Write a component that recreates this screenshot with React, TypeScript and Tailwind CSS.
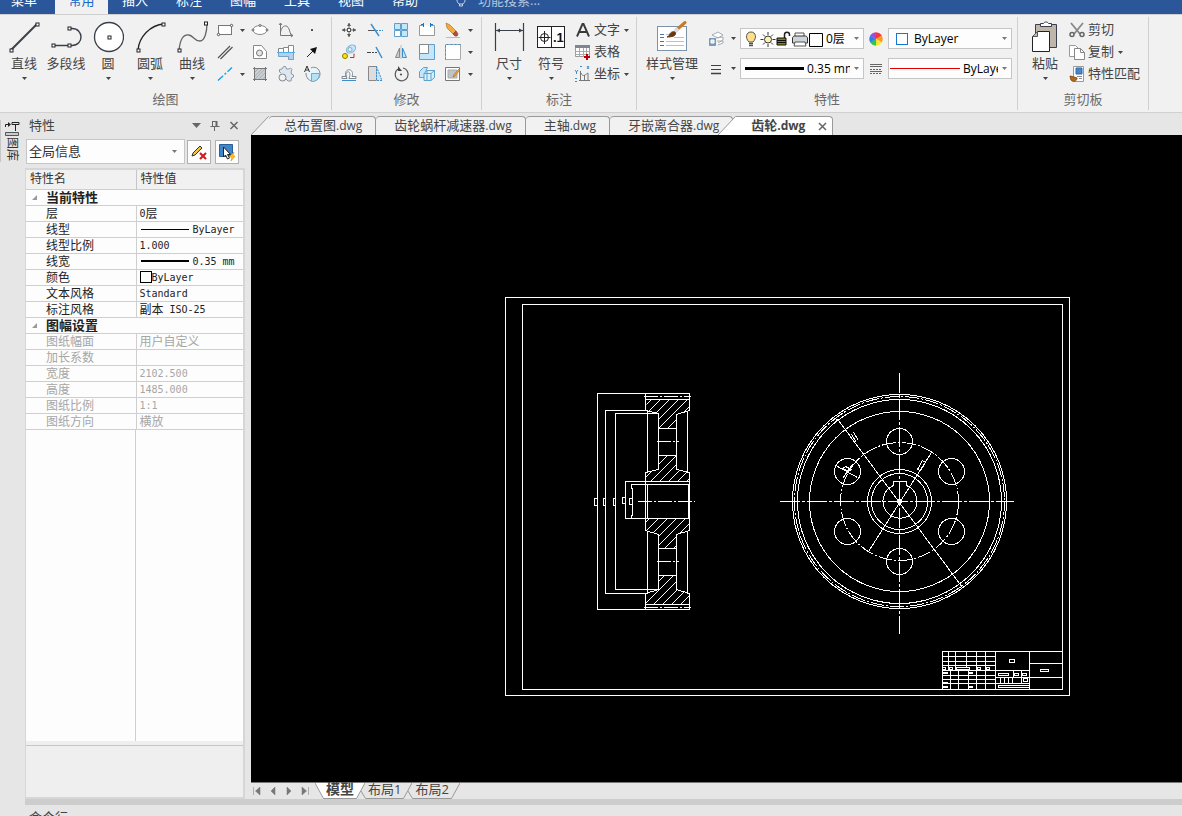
import { ReactNode } from "react";

const INK = "#3b3f4a";
const BLUE = "#3c8dcb";
const SKY = "#c3e6fa";

function Svg({ size = 18, children }: { size?: number; children: ReactNode }) {
  return (
    <svg width={size} height={size} viewBox={`0 0 ${size} ${size}`} fill="none" stroke={INK} className="shrink-0">
      {children}
    </svg>
  );
}

function Node({ x, y }: { x: number; y: number }) {
  return <rect x={x - 1.5} y={y - 1.5} width="3" height="3" fill="#fff" stroke="#222" />;
}

function Caret({ className = "text-[#444]" }: { className?: string }) {
  return (
    <svg width="5" height="3" viewBox="0 0 5 3" className={`shrink-0 ${className}`}>
      <path d="M0 0h5L2.5 3z" fill="currentColor" />
    </svg>
  );
}

/* ---------- large icons ---------- */

const lineIcon = (
  <Svg size={32}>
    <path d="M3 29 29 3" strokeWidth="2" />
    <Node x={3.5} y={29.5} />
    <Node x={29.5} y={3.5} />
  </Svg>
);

const polylineIcon = (
  <Svg size={32}>
    <path d="M3 24.5h16M19 7.5h3c12 0 12 17 0 17h-3" strokeWidth="1.4" />
    <Node x={3.5} y={24.5} />
    <Node x={19.5} y={24.5} />
    <Node x={19.5} y={7.5} />
  </Svg>
);

const circleIcon = (
  <Svg size={32}>
    <circle cx="17" cy="16" r="14.5" fill="#fff" strokeWidth="1.3" />
    <Node x={17.5} y={16.5} />
  </Svg>
);

const arcIcon = (
  <Svg size={32}>
    <path d="M4 29C5 16 16 4 30 3" stroke="#222" strokeWidth="1.3" />
    <Node x={4.5} y={29.5} />
    <Node x={29.5} y={3.5} />
  </Svg>
);

const curveIcon = (
  <Svg size={32}>
    <path d="M3 30C4 17 8 13 13 14s5 6 11 6c5 0 7-10 7-18" stroke="#666" strokeWidth="1.3" />
    <Node x={3.5} y={29.5} />
    <Node x={30} y={2.5} />
  </Svg>
);

const dimensionIcon = (
  <Svg size={32}>
    <path d="M2.5 2v28M30.5 2v28M3 9.5h27" strokeWidth="1.2" />
    <path d="M3 9.5l4-2v4zM30 9.5l-4-2v4z" fill={INK} stroke="none" />
  </Svg>
);

const symbolIcon = (
  <Svg size={32}>
    <rect x="2.500" y="5.500" width="27" height="21" fill="#fff" stroke="#222" />
    <path d="M16.500 5v22M3.500 16.500h12M9.500 10v13" stroke="#222" />
    <circle cx="9.500" cy="16.500" r="4" stroke="#222" />
    <text x="18" y="21" fontSize="13" fontWeight="700" fontFamily="Liberation Sans" fill="#111" stroke="none">
      .1
    </text>
  </Svg>
);

const styleIcon = (
  <Svg size={32}>
    <rect x="1.500" y="5.500" width="29" height="24" fill="#fff" stroke="#7b93a8" />
    <path d="M4 13.500h4M4 16.500h4M4 20.500h4M4 24.500h4" stroke="#4c74a0" />
    <path d="M10 13.500h6M18 16.500h10M10 20.500h18M10 24.500h18" stroke="#b4c1d4" />
    <path d="m29 1.500-8 7" stroke="#c87a2a" strokeWidth="3" strokeLinecap="round" />
    <path d="m22 7.500-3 3" stroke="#d8dde2" strokeWidth="4" />
    <path d="M13 15c1-4 4-5 6-4 2 3-1 5-8 5z" fill="#6b3a12" stroke="#6b3a12" />
  </Svg>
);

const pasteIcon = (
  <Svg size={32}>
    <path d="M6.500 3.500h21v23h-21z" fill="#bfb6ab" stroke={INK} />
    <path d="M11.500 5.500v-3h3c1-2 4-2 5 0h3v3z" fill="#fff" />
    <path d="M3.500 30.500v-15l5-5h12v20z" fill="#fff" stroke="#222" />
    <path d="M3.500 15.500h5v-5z" fill="#bbb" stroke="#555" />
  </Svg>
);

/* ---------- small icons ---------- */

const drawIcons: ReactNode[][] = [
  [
    <Svg>
      <rect x="2.500" y="4.500" width="13" height="9" fill="#fff" stroke="#777" />
      <circle cx="2.500" cy="13.500" r="1.200" fill="#fff" stroke="#555" />
      <circle cx="15.500" cy="4.500" r="1.200" fill="#fff" stroke="#555" />
    </Svg>,
    <Svg>
      <ellipse cx="9" cy="9" rx="7" ry="4.500" fill="#fff" stroke="#888" />
      <circle cx="2" cy="9" r="1" fill="#fff" stroke="#666" />
      <circle cx="16" cy="9" r="1" fill="#fff" stroke="#666" />
      <circle cx="9" cy="4.500" r="1" fill="#fff" stroke="#666" />
    </Svg>,
    <Svg>
      <path d="M3.500 2v12.500H16M2 4l1.500-2L5 4M14 13l2 1.500-2 1.500" stroke="#777" />
      <path d="M3.500 11C5 4 10 3 12 8l2 6" stroke="#777" />
    </Svg>,
    <Svg>
      <path d="M8 8h2v2H8z" fill="#555" stroke="none" />
    </Svg>,
  ],
  [
    <Svg>
      <path d="M2 15 14 3M4.500 16 16.500 4" stroke="#555" strokeWidth="1.200" />
    </Svg>,
    <Svg>
      <path d="M2.500 15.500v-13h8l5 6v7z" fill="#fff" stroke="#888" />
      <circle cx="8.500" cy="10" r="3" fill="#e4e4e4" stroke="#777" />
    </Svg>,
    <Svg>
      <path d="M1.500 5.500h5v7h-5zM6.500 4.500h5v9h-5zM11.500 2.500h5v14h-5z" fill="#fff" stroke="#888" />
      <path d="M1.500 9.500h15v7h-5v-3h-10z" fill="#b4d0ec" stroke="#7da0c4" />
      <path d="M0 9.500h18" stroke="#4ab0ea" />
    </Svg>,
    <Svg>
      <path d="m4 14 6-6" stroke="#222" />
      <path d="m14 4-2 7-5-5z" fill="#111" stroke="none" />
    </Svg>,
  ],
  [
    <Svg>
      <path d="M2 15.500 16 2.500" stroke="#19a0e6" strokeWidth="1.400" strokeDasharray="7 2 2 2" />
    </Svg>,
    <Svg>
      <path d="M3.500 3.500h11v11h-11z" fill="#c9ced3" stroke="#777" />
      <path d="m4 7 4-4M4 11l7-7M4 14 14 4M8 14l6-6M12 14l2-2" stroke="#aab0b6" />
      <path d="M2 3.500h14M2 14.500h14M3.500 2v14M14.500 2v14" stroke="#777" />
    </Svg>,
    <Svg>
      <path
        d="M4 8 2.500 7V4.500L5 4l1.500-2.500h2L9.500 4h2.500L13.500 3l1.500 1.500L14 7l.5 2 2 1v2l-2 1-.5 3h-3l-2-2"
        fill="#dde7f2"
        stroke="#8d97a1"
      />
      <circle cx="5.500" cy="12.500" r="3.500" fill="#f1f1f1" stroke="#7d8791" />
    </Svg>,
    <Svg>
      <path d="M3 8c0 11 14 10 14 1 0-6-6-8-9-6" fill="#e6f4fc" stroke="#888" />
      <path d="M8.500 8.500h8c0 5-3 8-8 8z" fill="#b6e2f8" stroke="#7aa9c4" />
      <path d="m1.500 7 2.500-6 2.500 6M2.500 5h3" stroke="#333" />
    </Svg>,
  ],
];

const modifyIcons: ReactNode[][] = [
  [
    <Svg>
      <path d="M9 2v5M9 11v5M2 9h5M11 9h5" stroke="#666" />
      <path d="M9 2 7 5h4zM9 16l-2-3h4zM2 9l3-2v4zM16 9l-3-2v4z" fill="#555" stroke="none" />
      <rect x="7.500" y="7.500" width="3" height="3" fill="#fff" stroke="#555" />
    </Svg>,
    <Svg>
      <path d="M2 9.500h7" stroke="#555" />
      <path d="M10 9.500h7" stroke={BLUE} strokeDasharray="2 1" />
      <path d="m5 3 8 12" stroke={BLUE} strokeWidth="1.400" />
    </Svg>,
    <Svg>
      <path d="M2.500 2.500h6v6h-6zM9.500 2.500h6v6h-6zM9.500 9.500h6v6h-6z" fill={SKY} stroke="#5f9fd0" />
      <path d="M2.500 9.500h6v6h-6z" fill="#fff" stroke="#5f9fd0" />
    </Svg>,
    <Svg>
      <path d="M5 4.500H1.500v10h15v-10H13" fill="#fff" stroke="#999" />
      <path d="M5.500 2v4M12.500 2v4M3 3.500h3M12 3.500h3" stroke="#1a75c0" />
    </Svg>,
    <Svg>
      <path d="m2 2 1 5 6 6 3-3-6-6z" fill="#f4a93c" stroke="#b98035" strokeWidth=".800" />
      <path d="m9 13 2 2h2l1-2-2-3z" fill="#b1503f" stroke="#8b4034" strokeWidth=".800" />
      <path d="M2 16.500h14" stroke="#bbb" />
    </Svg>,
  ],
  [
    <Svg>
      <circle cx="5" cy="13" r="2.500" fill="#ffe600" stroke="#8f7c00" />
      <ellipse cx="11" cy="6" rx="5" ry="3.500" fill={SKY} stroke="#7badcf" transform="rotate(-35 11 6)" />
      <circle cx="10" cy="6.500" r="2" fill="#eaf6fd" stroke="#7badcf" />
      <path d="M10 14.500h4v-4" stroke="#b33" />
    </Svg>,
    <Svg>
      <path d="M1 9.500h4" stroke="#444" />
      <path d="M6 9.500h6" stroke="#444" strokeDasharray="2 1" />
      <path d="m10 4 6 11" stroke={BLUE} strokeWidth="1.500" />
    </Svg>,
    <Svg>
      <path d="M7.500 5v9.500h-4z" fill="#ccc" stroke="#888" />
      <path d="M10.500 5v9.500h4z" fill={SKY} stroke={BLUE} />
      <path d="M9 2v14" stroke="#bbb" />
    </Svg>,
    <Svg>
      <path d="M1.500 1.500h15v15h-15z" fill={SKY} stroke="#5f9fd0" />
      <path d="M1.500 1.500h9v9h-9z" fill="#fff" stroke="#888" />
    </Svg>,
    <Svg>
      <path d="M1.500 1.500h15v15h-15z" fill="#fff" stroke="#aaa" />
      <path d="M1.500 16.500v-15h15" stroke={BLUE} strokeDasharray="2 2" />
    </Svg>,
  ],
  [
    <Svg>
      <path d="M2 11.500h4c-3-9 9-9 6 0h4v2H9c4-10-6-8-2 0H2z" fill="#fff" stroke="#7d8791" />
      <path d="M2 15.500h14" stroke={BLUE} />
    </Svg>,
    <Svg>
      <path d="M2.500 1.500h8v14h-8z" fill="#ddd" stroke="#888" />
      <path d="M10.500 1.500 16 15.500h-5.500z" fill={SKY} stroke={BLUE} strokeDasharray="2 1" />
    </Svg>,
    <Svg>
      <path d="M6 4a6.500 6.500 0 1 0 5-1" stroke="#555" strokeWidth="1.200" />
      <path d="M6 1v5h4z" fill="#444" stroke="none" />
      <circle cx="9" cy="9.500" r="1" fill="#444" stroke="none" />
    </Svg>,
    <Svg>
      <path d="m1.500 6.500 4-4h4l-2 4v6h-6z" fill={SKY} stroke="#5aa2cf" />
      <path d="m6 8.500 3-3h7.500v7L13 15.500H6z" fill="#d9f0fc" stroke="#5aa2cf" />
      <path d="M6 8.500h7v7M13 8.500l3.500-3M9 5.500v10" stroke="#5aa2cf" />
    </Svg>,
    <Svg>
      <path d="M1.500 2.500h14v13h-14z" fill="#fff" stroke="#777" />
      <path d="M4 5h9v8H4z" fill="#c0c4c8" stroke="#aaa" />
      <path d="m16 5-5 6-2 1 1-2.500 5-5.500z" fill="#f4a93c" stroke="#a8702a" strokeWidth=".700" />
    </Svg>,
  ],
];

const textIcon = (
  <Svg>
    <path d="M3 15.500 8.500 3h1L15 15.500M5 11h8" stroke="#3a3a3a" strokeWidth="1.900" />
  </Svg>
);

const tableIcon = (
  <Svg>
    <path d="M1.500 2.500h14v11h-14z" fill="#fff" stroke="#999" />
    <path d="M1 2h15v3H1z" fill="#7d8791" stroke="none" />
    <path d="M5.500 5v9M9.500 5v9M12.500 5v9M1 8.500h15M1 11.500h15" stroke="#aaa" />
    <path d="M10 14h6M13 11v6" stroke="#c00000" strokeWidth="2" />
  </Svg>
);

const coordIcon = (
  <Svg>
    <path d="M6.500 6v10M5 15.500h11M7 8c2 5 5 1 7 0v7M10.500 10v6" stroke="#777" />
    <path d="m1 5 1.500 2L4 5M2.500 7v2M6 1.500h2M13 1l2 3M15 1l-2 3M1 13.500h2M1 16.500h2" stroke={BLUE} />
  </Svg>
);

const cutIcon = (
  <Svg>
    <path d="m3 2 9 11M15 2 6 13" stroke="#888" strokeWidth="1.800" />
    <circle cx="4" cy="13.500" r="2" stroke="#666" strokeWidth="1.500" />
    <circle cx="14" cy="13.500" r="2" stroke="#666" strokeWidth="1.500" />
  </Svg>
);

const copyIcon = (
  <Svg>
    <path d="M1.500 2.500h6l3 3v8h-9z" fill="#fff" stroke="#999" />
    <path d="M6.500 5.500h6l4 4v7h-10z" fill="#fff" stroke="#888" />
    <path d="M12.500 5.500v4h4" stroke="#888" />
  </Svg>
);

const matchIcon = (
  <Svg>
    <path d="M5.500 1.500h10v15h-10z" fill="#fff" stroke="#999" />
    <path d="M8 3h6v6H8z" fill="#4a86c5" stroke="#2f6aa8" />
    <path d="M9 11.500h5M11 13.500h3" stroke="#888" />
    <path d="m2 11 4 1 3 1c0 4-5 4-6 2z" fill="#b0691e" stroke="#8b5216" />
  </Svg>
);

const layersIcon = (
  <Svg>
    <path d="m5 5 6-3 5 3-5 3zM9 8l7-1v3l-5 3M10 11h6v2l-5 2" fill="#fff" stroke="#a4adb6" />
    <path d="M2.500 8.500h6v7h-6z" fill="#7b9cbf" stroke="#7f98b2" />
    <path d="M4 10h3v3H4z" fill="#dbe9f7" stroke="#fff" />
  </Svg>
);

const weightIcon = (
  <Svg>
    <path d="M4 5.500h10M4 9.500h10" />
    <path d="M4 13.500h10" strokeWidth="1.500" />
  </Svg>
);

const linetypeIcon = (
  <Svg>
    <path d="M3 4.500h12M3 6.500h12M3 11.500h12" stroke="#666" />
    <path d="M3 9.500h12M3 13.500h12" stroke="#666" strokeDasharray="2 1" />
  </Svg>
);

const wheel = ["#f33", "#ff9a1f", "#ffe62e", "#35c443", "#2b7de9", "#a24bd8"];
const colorIcon = (
  <Svg>
    {wheel.map((c, i) => (
      <path key={c} d="M9 9V2.500a6.500 6.500 0 0 1 5.630 3.250z" fill={c} stroke={c} strokeWidth=".3" transform={`rotate(${i * 60} 9 9)`} />
    ))}
  </Svg>
);

const layerStateIcons = (
  <svg width="80" height="18" viewBox="0 0 80 18" fill="none" className="shrink-0">
    <path d="M5 12C1 8 2 2 7 2s6 6 2 10z" fill="#ffe08a" stroke="#555" />
    <path d="M5 13.500h4M5 15.500h4" stroke="#555" strokeWidth="1.500" />
    <circle cx="24" cy="9.500" r="3.500" fill="#fff3b0" stroke="#333" />
    <path d="M24 2v3M24 14v3M16.500 9.500h3M28.500 9.500h3M19 4.500l2 2M27 12.500l2 2M19 14.500l2-2M27 6.500l2-2" stroke="#333" />
    <path d="M40.500 8V4.500c0-3 5-3 5 0V6" stroke="#222" strokeWidth="1.500" />
    <path d="M33 8h9v7h-9z" fill="#8a8400" stroke="#111" />
    <path d="M33 10.500h9M33 12.500h9" stroke="#111" />
    <path d="M51 7V3h9v4" fill="#fff" stroke="#555" />
    <path d="M48.500 8c0-1 1-2 2-2h11c1 0 2 1 2 2v5h-15z" fill="#cfd4da" stroke="#333" />
    <path d="M51 12h10l1 4H50z" fill="#fff" stroke="#555" />
    <path d="M65.500 3.500h13v13h-13z" fill="#fff" stroke="#000" />
  </svg>
);

/* ---------- ribbon ---------- */

interface GroupProps {
  title: string;
  children: ReactNode;
  width: string;
  inset: string;
}

function Group({ title, children, width, inset }: GroupProps) {
  return (
    <section aria-label={title} className={`flex shrink-0 flex-col border-r border-[#d0d0d0] ${width}`}>
      <div className={`flex h-18 items-start ${inset}`}>{children}</div>
      <h2 className="text-center text-[13px] leading-5 text-[#6a6a6a]">{title}</h2>
    </section>
  );
}

function BigButton({ icon, label, caret = true, wide }: { icon: ReactNode; label: string; caret?: boolean; wide?: boolean }) {
  return (
    <button className={`flex shrink-0 flex-col items-center pt-1 whitespace-nowrap ${wide ? "w-15" : "w-[42px]"}`}>
      {icon}
      <span className="mb-1 leading-5">{label}</span>
      {caret && <Caret />}
    </button>
  );
}

function RowButton({ icon, label, caret }: { icon: ReactNode; label: string; caret?: boolean }) {
  return (
    <button className="flex h-[22px] items-center">
      <span className="mr-0.5">{icon}</span>
      {label}
      {caret && (
        <span className="ml-1">
          <Caret />
        </span>
      )}
    </button>
  );
}

function Combo({ label, value, lead, clip }: { label: string; value: string; lead: ReactNode; clip?: boolean }) {
  return (
    <label className="flex h-[21px] w-31 items-center border border-[#c6c6c6] bg-[#fdfdfd] pr-1">
      {lead}
      <select
        aria-label={label}
        className={`min-w-0 flex-1 appearance-none overflow-hidden bg-transparent text-[12px] leading-4 text-black outline-none ${clip ? "mr-1" : ""}`}
      >
        <option>{value}</option>
      </select>
      <Caret className="text-[#777]" />
    </label>
  );
}

function IconGrid({ rows, names }: { rows: ReactNode[][]; names: string }) {
  return (
    <>
      {rows.map((row, r) => (
        <div key={r} className="flex h-[22px]">
          {row.map((icon, c) => (
            <button key={c} aria-label={`${names} ${r + 1}-${c + 1}`} className="flex w-[26px] items-center justify-center">
              {icon}
            </button>
          ))}
        </div>
      ))}
    </>
  );
}

const menus = ["插入", "标注", "图幅", "工具", "视图", "帮助"];

function MenuBar() {
  return (
    <nav className="flex h-[14px] shrink-0 items-end overflow-hidden bg-[#2b579a] text-white">
      <button className="w-[55px] shrink-0 pb-[5px] pl-[11px] text-left leading-[18px]">菜单</button>
      <button className="w-[53px] shrink-0 bg-[#f1f1f1] pb-[5px] leading-[18px] text-[#1a66c4]">常用</button>
      {menus.map((m) => (
        <button key={m} className="w-[54px] shrink-0 pb-[5px] leading-[18px]">
          {m}
        </button>
      ))}
      <div className="ml-6 flex items-end gap-3">
        <svg width="10" height="14" viewBox="0 0 10 14" fill="none" stroke="#c9d5e8">
          <path d="M1 0c0 2 1 3 2 4h4c1-1 2-2 2-4M3.500 4v2h3V4" />
        </svg>
        <span className="pb-[5px] leading-[18px] text-[#b4c4de]">功能搜索...</span>
      </div>
    </nav>
  );
}

function Ribbon() {
  return (
    <div className="flex h-[99px] shrink-0 border-y border-[#d0d0d0] bg-[#f1f1f1] py-0.5 text-[#444]">
      <Group title="绘图" width="w-83" inset="pl-[3px]">
        <BigButton icon={lineIcon} label="直线" />
        <BigButton icon={polylineIcon} label="多段线" caret={false} />
        <BigButton icon={circleIcon} label="圆" />
        <BigButton icon={arcIcon} label="圆弧" />
        <BigButton icon={curveIcon} label="曲线" />
        <div className="flex pt-0.5">
          <div className="w-[34px] pl-[3px]">
            {drawIcons.map((row, i) => (
              <button key={i} aria-label={`绘图工具 ${i + 1}`} className="flex h-[22px] items-center gap-[6px]">
                {row[0]}
                {i !== 1 && <Caret />}
              </button>
            ))}
          </div>
          <div>
            <IconGrid names="绘图" rows={drawIcons.map((row) => row.slice(1))} />
          </div>
        </div>
      </Group>

      <Group title="修改" width="w-[150px]" inset="pl-1">
        <div className="pt-0.5">
          <IconGrid names="修改" rows={modifyIcons} />
        </div>
        <div className="flex flex-col pt-0.5 pl-0.5">
          {[1, 2, 3].map((n) => (
            <button key={n} aria-label={`更多修改 ${n}`} className="flex h-[22px] items-center">
              <Caret />
            </button>
          ))}
        </div>
      </Group>

      <Group title="标注" width="w-[155px]" inset="pl-[6px]">
        <BigButton icon={dimensionIcon} label="尺寸" />
        <BigButton icon={symbolIcon} label="符号" />
        <div className="flex flex-col pt-0.5 pl-0.5">
          <RowButton icon={textIcon} label="文字" caret />
          <RowButton icon={tableIcon} label="表格" />
          <RowButton icon={coordIcon} label="坐标" caret />
        </div>
      </Group>

      <Group title="特性" width="w-[381px]" inset="pl-[5px]">
        <BigButton icon={styleIcon} label="样式管理" wide />
        <div className="flex flex-col gap-[9px] pt-[11px] pl-[5px]">
          <div className="flex items-center">
            <button aria-label="图层" className="flex items-center gap-[6px]">
              {layersIcon}
              <Caret />
            </button>
            <div className="ml-1">
              <Combo label="当前层" value="0层" lead={<span className="mr-0.5 pl-[3px]">{layerStateIcons}</span>} />
            </div>
            <button aria-label="颜色设置" className="mx-[3px]">
              {colorIcon}
            </button>
            <Combo label="颜色" value="ByLayer" lead={<span className="mr-[6px] ml-[7px] size-3 shrink-0 border border-[#1a75d0] bg-white" />} />
          </div>
          <div className="flex items-center">
            <button aria-label="线宽设置" className="flex items-center gap-[6px]">
              {weightIcon}
              <Caret />
            </button>
            <div className="ml-1">
              <Combo label="线宽" value="0.35 mm" clip lead={<span className="mr-[3px] ml-1 h-[3px] w-[59px] shrink-0 bg-black" />} />
            </div>
            <button aria-label="线型设置" className="mx-[3px]">
              {linetypeIcon}
            </button>
            <Combo label="线型" value="ByLayer" clip lead={<span className="mr-[3px] ml-px h-px w-[70px] shrink-0 bg-[#e00000]" />} />
          </div>
        </div>
      </Group>

      <Group title="剪切板" width="w-[131px]" inset="pl-[6px]">
        <BigButton icon={pasteIcon} label="粘贴" />
        <div className="flex flex-col pt-0.5 pl-0.5">
          <RowButton icon={cutIcon} label="剪切" />
          <RowButton icon={copyIcon} label="复制" caret />
          <RowButton icon={matchIcon} label="特性匹配" />
        </div>
      </Group>
    </div>
  );
}

/* ---------- property panel ---------- */

interface Prop {
  name: string;
  cjk?: string;
  value?: string;
  line?: "thin" | "thick";
  swatch?: boolean;
}

const currentProps: Prop[] = [
  { name: "层", value: "0", cjk: "层" },
  { name: "线型", value: "ByLayer", line: "thin" },
  { name: "线型比例", value: "1.000" },
  { name: "线宽", value: "0.35 mm", line: "thick" },
  { name: "颜色", value: "ByLayer", swatch: true },
  { name: "文本风格", value: "Standard" },
  { name: "标注风格", cjk: "副本", value: "ISO-25" },
];

const sheetProps: Prop[] = [
  { name: "图纸幅面", cjk: "用户自定义" },
  { name: "加长系数" },
  { name: "宽度", value: "2102.500" },
  { name: "高度", value: "1485.000" },
  { name: "图纸比例", value: "1:1" },
  { name: "图纸方向", cjk: "横放" },
];

function Section({ title, items, muted }: { title: string; items: Prop[]; muted?: boolean }) {
  return (
    <tbody className={muted ? "text-[#a6a6a6]" : "text-[#222]"}>
      <tr className="h-4 border-b border-[#cfcfcf]">
        <th colSpan={2} className="p-0 text-left text-[13px] leading-[15px] font-bold text-[#222]">
          <span className="flex items-center">
            <svg width="20" height="6" viewBox="0 0 20 6">
              <path d="M6 6h5V1z" fill="#999" />
            </svg>
            {title}
          </span>
        </th>
      </tr>
      {items.map((p) => (
        <tr key={p.name} className="h-4 border-b border-[#cfcfcf]">
          <td className="border-r border-[#cfcfcf] p-0 pl-5 leading-[15px]">{p.name}</td>
          <td className="p-0 pl-[3px] leading-[15px]">
            <span className="flex items-center">
              {p.line === "thin" && <span className="mr-1 ml-px h-px w-12 bg-black" />}
              {p.line === "thick" && <span className="mr-1 ml-px h-0.5 w-12 bg-black" />}
              {p.swatch && <span className="size-3 border border-black bg-white" />}
              {p.cjk && p.value !== "0" && <span>{p.cjk}</span>}
              {p.value && (
                <span className={`font-['DejaVu_Sans_Mono',monospace] text-[10px] leading-[15px] ${p.value === "ISO-25" ? "ml-[6px]" : ""}`}>
                  {p.value}
                </span>
              )}
              {p.cjk && p.value === "0" && <span>{p.cjk}</span>}
            </span>
          </td>
        </tr>
      ))}
    </tbody>
  );
}

function PropertyPanel() {
  return (
    <aside className="flex w-[220px] shrink-0 flex-col">
      <header className="flex h-6 items-center pl-1 text-[#444]">
        <h1 className="flex-1 leading-5">特性</h1>
        <div className="flex items-center gap-[7px] pr-[5px]">
          <button aria-label="菜单">
            <svg width="12" height="12" viewBox="0 0 12 12">
              <path d="M2 4h9L6.500 9z" fill="#666" />
            </svg>
          </button>
          <button aria-label="固定">
            <svg width="12" height="12" viewBox="0 0 12 12" fill="none" stroke="#666">
              <path d="M3.500 2v5M3 2.500h5M1.500 7.500h9M5.500 8v4" />
              <path d="M7.500 2v5" strokeWidth="2" />
            </svg>
          </button>
          <button aria-label="关闭">
            <svg width="12" height="12" viewBox="0 0 12 12" fill="none" stroke="#666" strokeWidth="1.500">
              <path d="m2.500 3 7 7m0-7-7 7" />
            </svg>
          </button>
        </div>
      </header>

      <div className="flex items-center pt-0.5 pl-px">
        <label className="flex h-[25px] w-[159px] items-center border border-[#c6c6c6] bg-[#fdfdfd] pr-[7px] pl-0.5">
          <select aria-label="选择对象" className="flex-1 appearance-none bg-transparent text-[13px] text-[#333] outline-none">
            <option>全局信息</option>
          </select>
          <Caret className="text-[#777]" />
        </label>
        <button aria-label="取消选择" className="ml-0.5 flex size-6 items-center justify-center border border-[#b0b0b0] bg-[#fdfdfd]">
          <svg width="18" height="18" viewBox="0 0 18 18" fill="none">
            <path d="m2 13 1-3 7-7 2 2-7 7z" fill="#f6c23e" stroke="#333" />
            <path d="m10 10 6 6m0-6-6 6" stroke="#d01818" strokeWidth="2" />
          </svg>
        </button>
        <button aria-label="快速选择" className="ml-1 flex size-6 items-center justify-center border border-[#b0b0b0] bg-[#fdfdfd]">
          <svg width="18" height="18" viewBox="0 0 18 18" fill="none">
            <path d="M1.500 1.500h13v12h-13z" fill="#3e86c8" stroke="#2a5f9a" />
            <path d="M5.500 4v10l2-2 2 4 2-1-2-3.500h3z" fill="#fff" stroke="#222" />
            <path d="m16 9-5 5h3l-1 4 4-5h-2z" fill="#ffc12e" stroke="#d98200" strokeWidth=".500" />
          </svg>
        </button>
      </div>

      <div className="mt-1 flex flex-1 flex-col border-2 border-l border-[#d6d6d6] bg-[#fdfdfd]">
        <table className="w-full table-fixed border-collapse text-[12px]">
          <colgroup>
            <col className="w-[110px]" />
            <col />
          </colgroup>
          <thead>
            <tr className="h-[19px] border-b border-[#cfcfcf] bg-[#f1f1f1] text-[#333]">
              <th className="border-r border-[#c6c6c6] p-0 pl-1 text-left leading-[18px] font-normal">特性名</th>
              <th className="p-0 pl-1 text-left leading-[18px] font-normal">特性值</th>
            </tr>
          </thead>
          <Section title="当前特性" items={currentProps} />
          <Section title="图幅设置" items={sheetProps} muted />
        </table>
        <div className="w-[110px] flex-1 border-r border-[#cfcfcf]" />
        <div className="h-14 border-t-4 border-[#efefef] bg-[#efefef]">
          <div className="border-t border-[#c6c6c6]" />
        </div>
      </div>
    </aside>
  );
}

/* ---------- drawing ---------- */

const CX = 899;
const CY = 501;
const holes = [
  [899, 441],
  [951, 471],
  [951, 531],
  [899, 561],
  [847, 531],
  [847, 471],
];

const titleBoxes = [
  [1009, 659, 5, 3], [1040, 669, 8, 2], [998, 673, 10, 2], [1014, 673, 4, 2], [1022, 673, 4, 2],
  [1023, 678, 4, 3], [998, 685, 31, 2], [942, 667, 3, 2], [949, 667, 3, 2], [956, 667, 13, 2],
  [977, 667, 3, 2], [986, 667, 3, 2], [943, 672, 4, 1], [969, 672, 3, 1], [943, 682, 4, 1],
  [943, 686, 4, 1], [969, 686, 3, 1],
];

const hatch = Array.from({ length: 36 }, (_, i) => `M640 ${401 + i * 9}l60-60`).join("");

function Drawing() {
  return (
    <svg viewBox="251 135 931 647" className="size-full" fill="none" stroke="#fff" shapeRendering="crispEdges">
      <defs>
        <clipPath id="section">
          <path d="M646 399h43v11l-13 4v14h-18v-15l-12-3zM658 455h18v14l13 3v9h-44v-9l13-3zM645 518h44v12l-13 4v14h-18v-14l-13-4zM658 575h18v14l13 4v11h-44v-11l13-4z" />
        </clipPath>
      </defs>
      <g transform="translate(.5 .5)">
        <path d="M505 297h564v398H505zM522 304h540v385H522z" />

        {/* section view */}
        <path d="M689 393h-92v216h92" />
        <path d="M689 393v17l-13 4v55l13 3v58l-13 4v55l13 4v16" />
        <path d="M645 399h44M645 604h44M645 393v17l13 3v56l-13 3v58l13 4v55l-13 4v16" />
        <path d="M646 410h-41v183h40M658 413h-43v176h43M647 410v62M647 530v63M687 410v62M687 531v62" />
        <path d="M658 428h18M658 455h18M658 548h18M658 575h18" />
        <path d="M689 481h-64v37h64M689 484h-58v4h1v27h-1v3M645 481v37M647 484v34M688 484v34M689 472v58" />
        <path d="M594 498h3v7h-3zM603 498h2v7h-2zM613 498h2v7h-2zM622 497h3v6h-3zM629 498h3v6h-3z" />
        <path d="M643 396h47M643 607h47M656 441h22M656 561h22M637 501h57" strokeDasharray="14 2 2 2" />
        <path d={hatch} clipPath="url(#section)" />

        {/* front view */}
        <circle cx={CX} cy={CY} r="107" />
        <circle cx={CX} cy={CY} r="105" strokeDasharray="14 2 2 2" />
        <circle cx={CX} cy={CY} r="102" />
        <circle cx={CX} cy={CY} r="90" />
        <circle cx={CX} cy={CY} r="59" strokeDasharray="14 2 2 2" />
        <circle cx={CX} cy={CY} r="32" />
        <circle cx={CX} cy={CY} r="28" />
        <path d="M893 485v-4h13v4a17 17 0 1 1-13 0" />
        {holes.map(([x, y]) => (
          <circle key={`${x}-${y}`} cx={x} cy={y} r="13" />
        ))}
        <path d="M779 501h234M899 372v261" strokeDasharray="20 2 3 2" />
        <path d="m838 420 124 167M931 452l-63 99M837 466l20 11M842 478l10-14M853 432l5 8M851 434l5 8M917 469l5-9 3 2-5 8zM842 468l3-2 6 3-3 2z" />
        <path d="m836 419 3 1M897 499l4 4M901 499l-4 4" strokeWidth="2" />

        {/* title block */}
        <path d="M942 689v-38h120M942 656h53M942 661h53M942 665h53M942 670h87M942 675h53M942 679h53M942 683h87" />
        <path d="M948 651v19M955 651v19M966 651v19M976 651v38M985 651v38M995 651v38M950 670v19M958 670v19M968 670v19" />
        <path d="M995 677h67M1029 651v38M1029 663h33M1013 670v7M1021 670v13M1000 677v6M1004 677v6M1008 677v6M1012 677v6" />
        {titleBoxes.map(([x, y, w, h]) => (
          <rect key={`${x}-${y}`} x={x} y={y} width={w} height={h} fill="#000" />
        ))}
      </g>
    </svg>
  );
}

/* ---------- tabs ---------- */

const files = ["总布置图", "齿轮蜗杆减速器", "主轴", "牙嵌离合器"];

function Slant({ fill }: { fill: string }) {
  return (
    <svg width="18" height="19" viewBox="0 0 18 19" className="shrink-0">
      <path d="M0 19 18 0v19z" fill={fill} />
      <path d="M0 19 17.500.500h.500" fill="none" stroke="#999" />
    </svg>
  );
}

function FileTabs() {
  return (
    <div role="tablist" className="flex h-[22px] shrink-0 items-end bg-[#e6e6e6] text-[#444]">
      <Slant fill="#f1f1f1" />
      {files.map((f, i) => (
        <button
          key={f}
          role="tab"
          className={`h-[19px] shrink-0 rounded-t-sm border-t border-r border-[#999] bg-[#f1f1f1] pr-[13px] pb-0.5 leading-4 ${i === 0 ? "pl-[15px]" : "pl-[18px]"}`}
        >
          {f}
          <span className="text-[12px]">.dwg</span>
        </button>
      ))}
      <div className="-ml-[15px] flex shrink-0">
        <Slant fill="#fff" />
        <div className="flex h-[19px] items-center rounded-tr-sm border-t border-r border-[#999] bg-white">
          <button role="tab" aria-selected="true" className="pr-[13px] pb-0.5 pl-[15px] leading-4 font-bold">
            齿轮<span className="text-[12px]">.dwg</span>
          </button>
          <button aria-label="关闭" className="pr-[5px]">
            <svg width="9" height="9" viewBox="0 0 9 9" fill="none" stroke="#666" strokeWidth="1.500">
              <path d="m1 1 7 7m0-7-7 7" />
            </svg>
          </button>
        </div>
      </div>
    </div>
  );
}

const steps = ["M1.500 1v8M8 1v8L3.500 5z", "M7 1v8L3 5z", "M3 1v8l4-4z", "M8.500 1v8M2 1v8l4.500-4z"];

function LayoutTabs() {
  return (
    <div className="flex h-[17px] shrink-0 border-t border-[#777] bg-[#e6e6e6] text-[#444]">
      <div className="flex gap-[6px] pl-px">
        {steps.map((d, i) => (
          <button key={d} aria-label={`布局导航 ${i + 1}`}>
            <svg width="10" height="10" viewBox="0 0 10 10" fill="#777" stroke="#777" strokeWidth=".5">
              <path d={d} />
            </svg>
          </button>
        ))}
      </div>
      <div role="tablist" className="flex pl-[5px]">
        {["模型", "布局1", "布局2"].map((t, i) => (
          <button key={t} role="tab" aria-selected={i === 0} className="flex">
            <svg width="9" height="16" viewBox="0 0 9 16" fill="none" stroke="#999">
              {i === 0 ? <path d="m0 0 8.500 15.500H9V0z" fill="#fff" stroke="none" /> : null}
              <path d={i === 0 ? "m0 0 8.500 15.500H9" : "m4 8 4.500 7.500H9"} />
            </svg>
            <span className={`h-4 border-b border-[#999] leading-3 ${i === 0 ? "bg-white px-0.5 text-[14px] font-bold" : "px-0.5"}`}>{t}</span>
            <svg width="9" height="16" viewBox="0 0 9 16" fill="none" stroke="#999" className="-mr-2">
              {i === 0 ? <path d="M9 0 .5 15.500H0V0z" fill="#fff" stroke="none" /> : null}
              <path d="M9 0 .5 15.500H0" />
            </svg>
          </button>
        ))}
      </div>
    </div>
  );
}

function Rail() {
  return (
    <div className="w-[25px] shrink-0">
      <button className="mt-[7px] flex flex-col items-center border-l border-[#c6c6c6] pl-[3px] text-[12px] text-[#333]">
        <svg width="16" height="17" viewBox="0 0 16 17" fill="none" stroke="#222">
          <path d="M1.500 7V4.500H5M8 2.500h7v2H8zM11.500 5v6" />
          <path d="m4 2 3 2.500L4 7z" fill="#222" stroke="none" />
          <path d="M1.500 12.500h13v3h-13z" fill="#ccc" stroke="#555" />
        </svg>
        <span className="h-[25px] leading-4 [text-orientation:sideways] [writing-mode:vertical-rl]">图库</span>
      </button>
    </div>
  );
}

export default function App() {
  return (
    <div className="flex h-screen flex-col overflow-hidden bg-[#e6e6e6] font-['Open_Sans','Noto_Sans_CJK_SC',sans-serif] text-[13px]">
      <MenuBar />
      <Ribbon />
      <div className="flex min-h-0 flex-1">
        <Rail />
        <div className="flex min-w-0 flex-1 flex-col">
          <div className="flex min-h-0 flex-1">
            <PropertyPanel />
            <main className="ml-[6px] flex min-w-0 flex-1 flex-col">
              <FileTabs />
              <div className="min-h-0 flex-1 bg-black">
                <Drawing />
              </div>
              <LayoutTabs />
            </main>
          </div>
          <div className="h-[6px] shrink-0 bg-[#cdcdcd]" />
          <div className="h-[11px] shrink-0 overflow-hidden pl-1 leading-6 text-[#444]">命令行</div>
        </div>
      </div>
    </div>
  );
}
